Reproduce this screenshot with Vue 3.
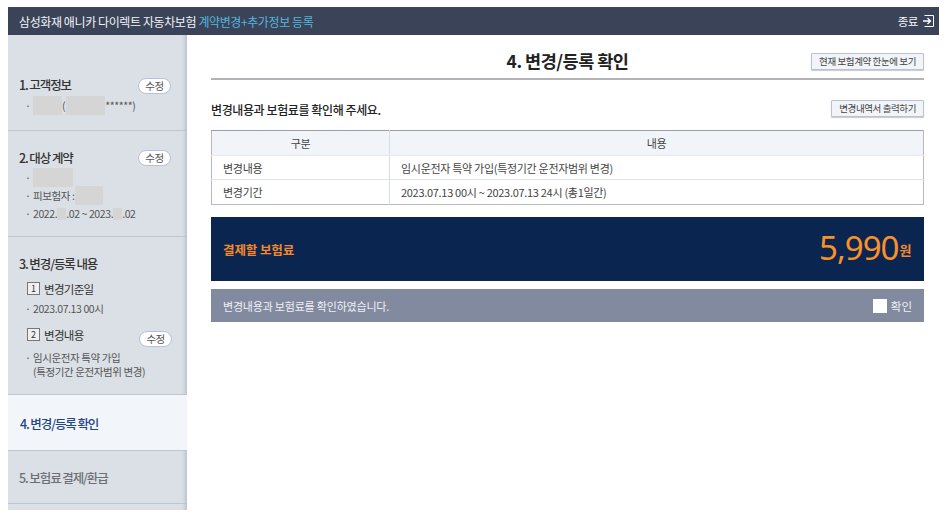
<script setup>
const rows = [
  { label: '변경내용', value: '임시운전자 특약 가입(특정기간 운전자범위 변경)' },
  { label: '변경기간', value: '2023.07.13 00시 ~ 2023.07.13 24시 (총1일간)' }
]
</script>

<template>
  <div class="page">
    <header class="topbar">
      <div class="title">삼성화재 애니카 다이렉트 자동차보험 <span class="accent">계약변경+추가정보 등록</span></div>
      <div class="close">
        <span>종료</span>
        <svg width="12" height="12" viewBox="0 0 12 12" fill="none">
          <path d="M2.5 .5H11.5V11.5H2.5" stroke="#fff" stroke-width="1" />
          <path d="M1 6H8.5M5.5 3L8.5 6L5.5 9" stroke="#fff" stroke-width="1.3" />
        </svg>
      </div>
    </header>
    <div class="body">
      <aside class="side">
        <section class="step s1">
          <div class="step-head"><h3>1. 고객정보</h3><span class="pill">수정</span></div>
          <div class="li"><i>·</i><span class="blur w29"></span><span class="tight">(</span><span class="blur w39"></span><span>******)</span></div>
        </section>
        <section class="step s2">
          <div class="step-head"><h3>2. 대상 계약</h3><span class="pill">수정</span></div>
          <div class="li"><i>·</i><span class="blur w40"></span></div>
          <div class="li"><i>·</i><span>피보험자 : </span><span class="blur w28"></span></div>
          <div class="li"><i>·</i><span>2022.</span><span class="blur w9 short"></span><span>.02 ~ 2023.</span><span class="blur w9 short"></span><span>.02</span></div>
        </section>
        <section class="step s3">
          <h3>3. 변경/등록 내용</h3>
          <div class="sub"><b class="num">1</b><span>변경기준일</span></div>
          <div class="li"><i>·</i><span>2023.07.13 00시</span></div>
          <div class="sub sub2"><b class="num">2</b><span>변경내용</span><span class="pill">수정</span></div>
          <div class="li li-wrap"><i>·</i><span>임시운전자 특약 가입<br />(특정기간 운전자범위 변경)</span></div>
        </section>
        <section class="step s4"><h3>4. 변경/등록 확인</h3></section>
        <section class="step s5"><h3>5. 보험료 결제/환급</h3></section>
        <div class="s6"></div>
      </aside>
      <main class="main">
        <div class="main-head">
          <h1>4. 변경/등록 확인</h1>
          <button class="btn">현재 보험계약 한눈에 보기</button>
        </div>
        <div class="lead">
          <p>변경내용과 보험료를 확인해 주세요.</p>
          <button class="btn">변경내역서 출력하기</button>
        </div>
        <table class="tbl">
          <thead>
            <tr><th class="c1">구분</th><th>내용</th></tr>
          </thead>
          <tbody>
            <tr v-for="r in rows" :key="r.label"><td>{{ r.label }}</td><td>{{ r.value }}</td></tr>
          </tbody>
        </table>
        <div class="pay">
          <span class="pay-label">결제할 보험료</span>
          <span class="pay-amt"><strong>5,990</strong><em>원</em></span>
        </div>
        <div class="confirm">
          <span>변경내용과 보험료를 확인하였습니다.</span>
          <label class="check"><i class="box"></i>확인</label>
        </div>
      </main>
    </div>
  </div>
</template>

<style>
html, body { margin: 0; background: #fff; }
</style>

<style scoped>
.page {
  width: 931px;
  height: 503px;
  margin: 7px 0 0 8px;
  font-family: "Noto Sans CJK KR", "Noto Sans", sans-serif;
  color: #444;
  font-size: 11px;
  letter-spacing: -0.4px;
  overflow: hidden;
}
.topbar {
  height: 28px;
  background: #3a4358;
  display: flex;
  align-items: center;
  justify-content: space-between;
  padding: 0 5px 0 11px;
  color: #f2f4f7;
  font-size: 12px;
}
.accent { color: #54b6de; }
.close { display: flex; align-items: center; gap: 4px; font-size: 11.5px; }
.body { display: flex; height: 475px; }
.side {
  width: 179px;
  flex: none;
  background: #dbe0e6;
  box-shadow: inset -5px 0 5px -4px #aab2c2;
  display: flex;
  flex-direction: column;
}
.step { box-sizing: border-box; padding: 0 11px; border-bottom: 1px solid #bfc5d0; }
h3 { margin: 0; font-size: 12.5px; font-weight: 500; color: #333; letter-spacing: -1.1px; }
.step-head { display: flex; align-items: center; justify-content: space-between; padding-right: 5px; }
.step-head h3 { margin-bottom: 2px; }
.s1 { height: 96px; padding-top: 40px; }
.s2 { height: 106px; padding-top: 17px; }
.s3 { height: 159px; padding-top: 17px; }
.s4 {
  height: 56px;
  padding-top: 2px;
  background: #f2f5fa;
  display: flex;
  align-items: center;
}
.s4 h3 { color: #1f4582; margin-left: 1px; }
.s5 { height: 53px; display: flex; align-items: center; padding-top: 1px; }
.s5 h3 { color: #6c6f75; }
.s6 { height: 6px; }
.pill {
  box-sizing: border-box;
  width: 33px;
  height: 16px;
  border: 1px solid #b9bfdc;
  border-radius: 8px;
  background: #fff;
  font-size: 10.5px;
  line-height: 14px;
  text-align: center;
  color: #555;
  flex: none;
}
.li { display: flex; align-items: center; height: 18px; font-size: 10.5px; color: #555; padding-left: 6px; }
.li i { font-style: normal; width: 8px; flex: none; }
.blur { display: inline-block; height: 19px; background: #d6d5d5; flex: none; }
.w29 { width: 29px; }
.w40 { width: 40px; }
.w39 { width: 39px; }
.w28 { width: 28px; }
.w9 { width: 9px; }
.short { height: 12px; }
.tight { margin-right: 1px; }
.sub {
  display: flex;
  align-items: center;
  gap: 4px;
  font-size: 11.5px;
  letter-spacing: -0.7px;
  color: #333;
  margin: 7px 0 0 8px;
  height: 18px;
}
.sub2 { margin-top: 8px; }
.sub2 .pill { margin-left: auto; margin-right: 4px; margin-top: 8px; }
.num {
  box-sizing: border-box;
  width: 13px;
  height: 13px;
  border: 1px solid #777;
  background: #eef0f3;
  font-size: 9px;
  font-weight: 400;
  line-height: 11px;
  text-align: center;
  letter-spacing: 0;
}
.s3 .li { margin-top: 2px; }
.s3 .li-wrap { height: auto; align-items: flex-start; line-height: 14px; margin-top: 7px; }
.main { flex: 1; padding: 0 15px 0 24px; min-width: 0; }
.main-head {
  height: 43px;
  border-bottom: 2px solid #b4b4b8;
  display: grid;
  grid-template-columns: 1fr auto 1fr;
  align-items: start;
}
h1 {
  grid-column: 2;
  margin: 14px 0 0;
  text-align: center;
  font-size: 17.5px;
  line-height: 24px;
  font-weight: 700;
  color: #222;
  letter-spacing: -0.5px;
}
.btn {
  box-sizing: border-box;
  height: 17px;
  padding: 0 7px;
  border: 1px solid #bcc2cc;
  border-radius: 1px;
  background: #f1f4f8;
  box-shadow: 0 1px 1px #c5cad3;
  font: inherit;
  font-size: 9.5px;
  letter-spacing: -0.4px;
  line-height: 15px;
  color: #444;
}
.main-head .btn { grid-column: 3; justify-self: end; margin-top: 18px; }
.lead { display: flex; align-items: flex-start; justify-content: space-between; height: 18px; margin-top: 20px; }
.lead p { margin: 0; font-size: 12px; font-weight: 500; color: #222; line-height: 20px; }
.tbl {
  width: 100%;
  margin-top: 12px;
  border-collapse: collapse;
  table-layout: fixed;
  border: 1px solid #b5b9c2;
  border-top: 1px solid #9a9ea8;
  font-size: 11px;
  letter-spacing: -0.3px;
}
th { height: 24px; background: #f1f4f9; font-weight: 400; border-bottom: 1px solid #e6eaf0; padding: 0; }
td { height: 23px; padding: 0 11px; border-top: 1px solid #e0e4ea; }
tr:last-child td { height: 24px; }
.c1 { width: 177px; }
th + th, td + td { border-left: 1px solid #d8dce4; }
.pay {
  box-sizing: border-box;
  height: 64px;
  margin-top: 12px;
  background: #0a2550;
  display: flex;
  align-items: center;
  justify-content: space-between;
  padding: 0 13px 0 12px;
  color: #f5892a;
}
.pay-label { font-size: 12.5px; font-weight: 700; letter-spacing: -0.1px; }
.pay-amt { display: flex; align-items: center; }
.pay-amt strong {
  font-family: "Noto Sans", sans-serif;
  font-size: 33px;
  line-height: 40px;
  margin-bottom: 2px;
  font-weight: 400;
  letter-spacing: -1px;
  color: #fa9128;
}
.pay-amt em { font-style: normal; font-size: 13px; font-weight: 700; margin-left: 1px; }
.confirm {
  box-sizing: border-box;
  height: 33px;
  margin-top: 8px;
  background: #828aa0;
  display: flex;
  align-items: center;
  justify-content: space-between;
  padding: 0 12px;
  color: #f0f1f4;
  letter-spacing: -0.2px;
}
.check { display: flex; align-items: center; gap: 4px; font-size: 11.5px; letter-spacing: 0; }
.box { width: 14px; height: 14px; background: #fff; display: block; }
</style>
